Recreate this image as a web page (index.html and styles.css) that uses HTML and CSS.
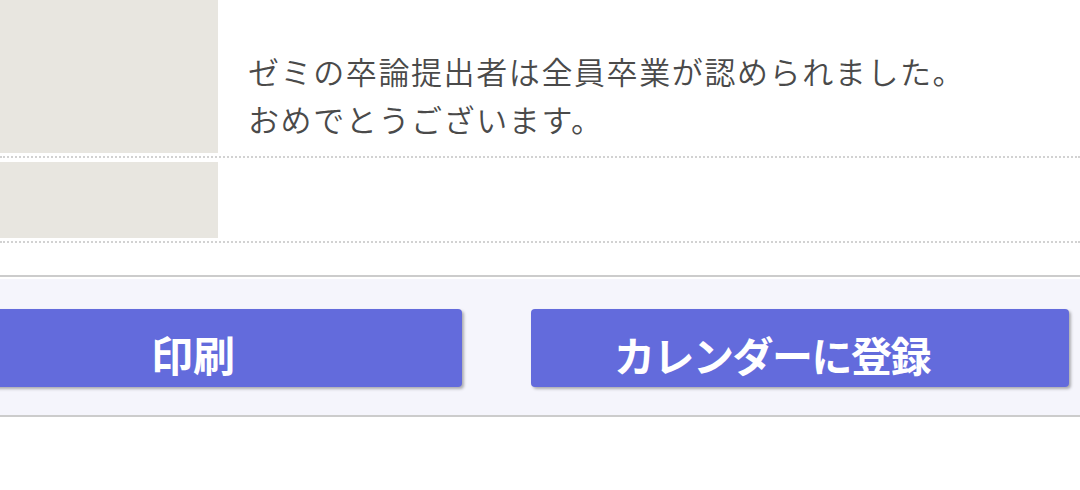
FILE: index.html
```html
<!DOCTYPE html>
<html lang="ja">
<head>
<meta charset="utf-8">
<link rel="stylesheet" href="styles.css">
</head>
<body>
<div class="page">
  <div class="rows">
    <div class="row first">
      <div class="head"></div>
      <div class="cell">ゼミの卒論提出者は全員卒業が認められました。<br>おめでとうございます。</div>
    </div>
    <div class="row second">
      <div class="head"></div>
      <div class="cell"></div>
    </div>
  </div>
  <div class="footer">
    <div class="band">
      <button class="btn">印刷</button>
      <button class="btn btn-cal">カレンダーに登録</button>
    </div>
  </div>
</div>
</body>
</html>
```
FILE: styles.css
```css
html, body {
  margin: 0;
  padding: 0;
  background: #ffffff;
  overflow: hidden;
}
body {
  width: 1080px;
  height: 490px;
  font-family: "Noto Sans CJK JP", "Noto Sans", sans-serif;
}
.rows {
  display: flex;
  flex-direction: column;
}
.row {
  display: flex;
  padding: 4px 0 3px;
  border-bottom: 2px dotted #d2d2d2;
}
.row.first {
  padding-top: 0;
}
.head {
  width: 218px;
  flex: none;
  background: #e8e6e0;
}
.cell {
  flex: 1;
  padding: 47px 0 10px 30px;
  font-size: 31px;
  line-height: 48px;
  color: #4a4a4a;
  letter-spacing: 1.6px;
  font-weight: 350;
}
.row.second .cell {
  height: 76px;
  padding: 0;
}
.footer {
  margin-top: 32px;
  border-top: 2px solid #cccccc;
  border-bottom: 2px solid #cccccc;
}
.band {
  margin-top: 2px;
  background: #f5f5fc;
  display: grid;
  grid-template-columns: 1fr 1fr;
  column-gap: 69px;
  padding: 30px 11px 28px 0;
  margin-left: -76px;
}
.btn {
  min-width: 0;
  height: 78px;
  border: none;
  border-radius: 4px;
  background: #636bdc;
  color: #ffffff;
  font-family: "Noto Sans CJK JP", sans-serif;
  font-weight: 700;
  font-size: 42px;
  line-height: 78px;
  padding: 6px 0 0;
  box-shadow: 2px 2px 3px rgba(0, 0, 0, 0.3);
}
.btn-cal {
  font-size: 41px;
  letter-spacing: -1.5px;
  padding-right: 56px;
}
```
